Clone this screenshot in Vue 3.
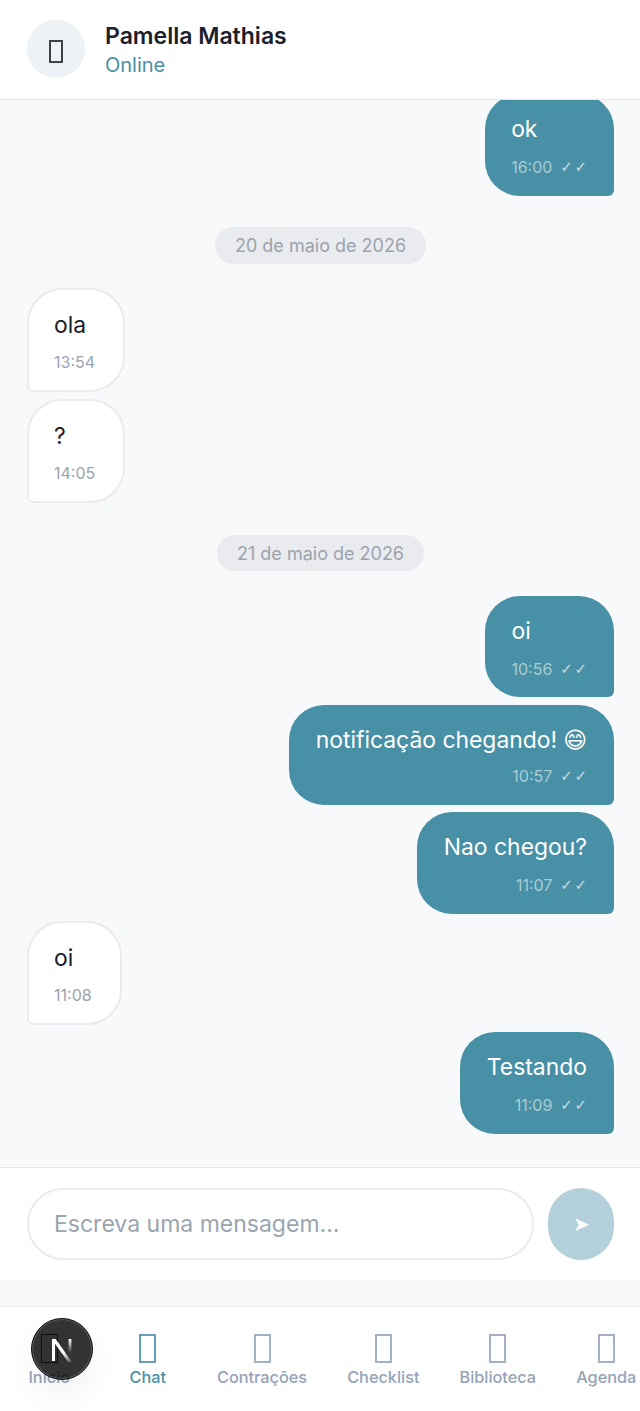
<script setup>
const blocks = [
  { type: 'msg', mine: true, text: 'ok', time: '16:00' },
  { type: 'date', text: '20 de maio de 2026' },
  { type: 'msg', text: 'ola', time: '13:54' },
  { type: 'msg', text: '?', time: '14:05' },
  { type: 'date', text: '21 de maio de 2026' },
  { type: 'msg', mine: true, text: 'oi', time: '10:56' },
  { type: 'msg', mine: true, text: 'notificação chegando!', emoji: '😄', time: '10:57' },
  { type: 'msg', mine: true, text: 'Nao chegou?', time: '11:07' },
  { type: 'msg', text: 'oi', time: '11:08' },
  { type: 'msg', mine: true, text: 'Testando', time: '11:09' }
];

const tabs = [
  { label: 'Início', home: true },
  { label: 'Chat', active: true },
  { label: 'Contrações' },
  { label: 'Checklist' },
  { label: 'Biblioteca' },
  { label: 'Agenda' }
];
</script>

<template>
  <div class="page">
    <header class="header">
      <div class="avatar"><span class="tofu"></span></div>
      <div class="who">
        <div class="name">Pamella Mathias</div>
        <div class="status">Online</div>
      </div>
    </header>

    <main class="messages">
      <template v-for="(b, i) in blocks" :key="i">
        <div v-if="b.type === 'date'" class="date">{{ b.text }}</div>
        <div v-else class="bubble" :class="[b.mine ? 'mine' : 'theirs', { 'has-emoji': b.emoji }]">
          <div class="text">{{ b.text }}<span v-if="b.emoji" class="emoji">{{ b.emoji }}</span></div>
          <div class="meta">
            <span>{{ b.time }}</span>
            <span v-if="b.mine" class="checks">✓✓</span>
          </div>
        </div>
      </template>
    </main>

    <form class="composer" @submit.prevent>
      <input class="input" type="text" placeholder="Escreva uma mensagem...">
      <button class="send" type="submit">➤</button>
    </form>

    <nav class="tabs">
      <a v-for="t in tabs" :key="t.label" class="tab" :class="{ active: t.active, home: t.home }">
        <span class="tab-icon"></span>
        <span class="tab-label">{{ t.label }}</span>
      </a>
    </nav>

    <div class="dev-badge">
      <svg width="36" height="36" viewBox="0 -1 36 36" fill="none">
        <defs>
          <linearGradient id="nfade" x1="20" y1="20" x2="29" y2="32" gradientUnits="userSpaceOnUse">
            <stop offset="0" stop-color="#fff" />
            <stop offset="1" stop-color="#fff" stop-opacity="0" />
          </linearGradient>
          <linearGradient id="nstem" x1="26" y1="7" x2="26" y2="21" gradientUnits="userSpaceOnUse">
            <stop offset="0" stop-color="#fff" />
            <stop offset="1" stop-color="#fff" stop-opacity="0" />
          </linearGradient>
        </defs>
        <path d="M8 7h3.4L28 30h-4L11 11.5V29H8z" fill="url(#nfade)" />
        <path d="M8 7h3.4l9 12.6-1.6 2.4L11 11.5V29H8z" fill="#fff" />
        <rect x="24.6" y="7" width="2.8" height="14" fill="url(#nstem)" />
      </svg>
    </div>
  </div>
</template>

<style scoped>
.page {
  position: relative;
  display: flex;
  flex-direction: column;
  width: 640px;
  height: 1411px;
  overflow: hidden;
  background: #f8f9fb;
  font-family: Inter, "Noto Sans", sans-serif;
  color: #1a202c;
}
.header {
  display: flex;
  align-items: center;
  gap: 20px;
  flex: none;
  height: 98.5px;
  padding: 0 27px;
  background: #fff;
  border-bottom: 1.5px solid #e5e7eb;
}
.avatar {
  display: flex;
  align-items: center;
  justify-content: center;
  width: 58px;
  height: 58px;
  border-radius: 50%;
  background: #edf2f6;
}
.tofu {
  box-sizing: border-box;
  width: 14px;
  height: 23px;
  margin-top: 5px;
  border: 2px solid #222;
  opacity: 0.85;
}
.who {
  padding-top: 2px;
}
.name {
  font-size: 23px;
  line-height: 30px;
  font-weight: 600;
  color: #1a202c;
}
.status {
  font-size: 20px;
  line-height: 28px;
  color: #4a90a4;
}
.messages {
  flex: 1;
  min-height: 0;
  display: flex;
  flex-direction: column;
  justify-content: flex-end;
  gap: 7.4px;
  padding: 0 26px 33px 27px;
  overflow: hidden;
}
.date {
  flex: none;
  align-self: center;
  margin: 24px 0 17px;
  padding: 0 20px;
  height: 36.4px;
  line-height: 38px;
  border-radius: 18px;
  background: #e9ebee;
  color: #9ca3af;
  font-size: 18px;
}
.bubble {
  flex: none;
  padding: 20px 27px 16.6px 26.5px;
  border-radius: 35px;
}
.mine {
  align-self: flex-end;
  background: #4790a6;
  color: #fff;
  border-bottom-right-radius: 6px;
}
.theirs {
  align-self: flex-start;
  padding: 19.5px 28px 16px 25px;
  background: #fff;
  border: 2px solid #e9ebee;
  border-bottom-left-radius: 6px;
}
.text {
  font-size: 22.9px;
  line-height: 31.5px;
}
.emoji {
  display: inline-block;
  margin-left: 6px;
  font-family: "DejaVu Sans", sans-serif;
}
.meta {
  display: flex;
  justify-content: flex-end;
  gap: 8px;
  margin-top: 9.5px;
  font-size: 16px;
  line-height: 24px;
  color: #9ca3af;
}
.mine .meta {
  color: rgba(255, 255, 255, 0.55);
}
.theirs .meta {
  justify-content: flex-start;
  margin-top: 9px;
}
.has-emoji .meta {
  margin-top: 8px;
}
.checks {
  font-family: "DejaVu Sans", sans-serif;
  font-size: 15px;
  letter-spacing: 1.5px;
  margin-right: -1.5px;
  color: rgba(255, 255, 255, 0.7);
}
.composer {
  flex: none;
  display: flex;
  align-items: center;
  gap: 14px;
  height: 112px;
  padding: 0 26px 0 27px;
  margin-bottom: 26px;
  background: #fff;
  border-top: 1px solid #e5e7eb;
}
.input {
  flex: 1;
  min-width: 0;
  box-sizing: border-box;
  height: 72px;
  padding: 0 25px;
  border: 2px solid #e9ebee;
  border-radius: 36px;
  outline: none;
  background: #fff;
  font-family: inherit;
  font-size: 23px;
  color: #1a202c;
}
.input::placeholder {
  color: #9aa5b1;
  opacity: 1;
}
.send {
  flex: none;
  width: 66px;
  height: 72px;
  border: none;
  border-radius: 33px;
  background: #b4d0db;
  color: #fff;
  font-size: 20px;
  padding: 0;
}
.tabs {
  flex: none;
  display: flex;
  box-sizing: border-box;
  height: 105px;
  background: #fff;
  border-top: 1px solid #e5e7eb;
}
.tab {
  flex: none;
  display: flex;
  flex-direction: column;
  align-items: center;
  min-width: 98.5px;
  padding: 27px 20px 0;
  box-sizing: border-box;
  color: #94a3b8;
}
.tab.active {
  color: #4a90a4;
}
.tab-icon {
  box-sizing: border-box;
  width: 17px;
  height: 29px;
  border: 2px solid currentColor;
  opacity: 0.85;
}
.tab.home .tab-icon {
  border-color: #24243a;
  border-width: 1px;
}
.tab-label {
  margin-top: 4px;
  font-size: 16.3px;
  line-height: 20px;
  font-weight: 500;
}
.dev-badge {
  position: absolute;
  left: 31px;
  top: 1318px;
  display: flex;
  align-items: center;
  justify-content: center;
  box-sizing: border-box;
  width: 62px;
  height: 62px;
  border-radius: 50%;
  background: rgba(0, 0, 0, 0.8);
  border: 1px solid #111;
  box-shadow: 0 0 0 1px rgba(255, 255, 255, 0.2) inset, 0 16px 32px rgba(0, 0, 0, 0.05);
}
</style>
